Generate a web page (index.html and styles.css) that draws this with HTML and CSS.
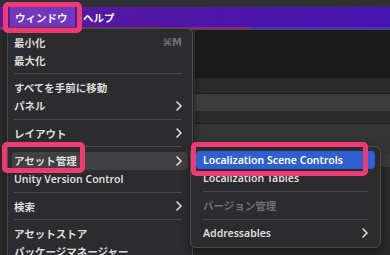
FILE: index.html
```html
<!DOCTYPE html>
<html lang="ja">

<head>
    <meta charset="UTF-8">
    <meta name="viewport" content="width=device-width, initial-scale=1.0">
    <title>ウィンドウ メニュー</title>
    <link rel="stylesheet" href="styles.css">
</head>

<body>
    <div class="screen">
        <div class="top-strip"></div>
        <div class="menubar">
            <span class="menubar-item active">ウィンドウ</span>
            <span class="menubar-item">ヘルプ</span>
        </div>
        <div class="bar-line"></div>
        <div class="bar-edge"></div>

        <!-- editor background -->
        <div class="editor">
            <div class="panel panel-dark"></div>
            <div class="panel row-a"></div>
            <div class="panel row-b"></div>
            <div class="panel row-a short"></div>
            <div class="panel row-c"></div>
            <div class="panel row-d"></div>
            <div class="panel row-a tall"></div>
        </div>

        <!-- window menu -->
        <div class="menu main-menu">
            <div class="item"><span>最小化</span><span class="shortcut">⌘M</span></div>
            <div class="item"><span>最大化</span></div>
            <div class="sep"></div>
            <div class="item"><span>すべてを手前に移動</span></div>
            <div class="item"><span>パネル</span><svg class="chev" viewBox="0 0 6 10"><polyline points="1,1 5,5 1,9" /></svg></div>
            <div class="sep"></div>
            <div class="item"><span>レイアウト</span><svg class="chev" viewBox="0 0 6 10"><polyline points="1,1 5,5 1,9" /></svg></div>
            <div class="sep"></div>
            <div class="item hover"><span>アセット管理</span><svg class="chev" viewBox="0 0 6 10"><polyline points="1,1 5,5 1,9" /></svg></div>
            <div class="item"><span>Unity Version Control</span></div>
            <div class="sep"></div>
            <div class="item"><span>検索</span><svg class="chev" viewBox="0 0 6 10"><polyline points="1,1 5,5 1,9" /></svg></div>
            <div class="sep"></div>
            <div class="item"><span>アセットストア</span></div>
            <div class="item"><span>パッケージマネージャー</span></div>
        </div>

        <!-- asset management submenu -->
        <div class="menu sub-menu">
            <div class="item selected"><span>Localization Scene Controls</span></div>
            <div class="item"><span>Localization Tables</span></div>
            <div class="sep"></div>
            <div class="item disabled"><span>バージョン管理</span></div>
            <div class="sep"></div>
            <div class="item"><span>Addressables</span><svg class="chev" viewBox="0 0 6 10"><polyline points="1,1 5,5 1,9" /></svg></div>
        </div>

        <!-- callouts -->
        <div class="callout c-window"></div>
        <div class="callout c-asset"></div>
        <div class="callout c-scene"></div>
    </div>
</body>

</html>
```

FILE: styles.css
```css
* {
    box-sizing: border-box;
}

body {
    margin: 0;
    background: #2b2b2b;
    font-family: "Noto Sans", "Noto Sans CJK JP", sans-serif;
    font-size: 10.5px;
    font-weight: 600;
    color: #dedede;
}

.screen {
    position: relative;
    width: 390px;
    height: 255px;
    overflow: hidden;
}

.top-strip {
    height: 7px;
    background: #302f33;
}

.menubar {
    height: 20px;
    display: flex;
    align-items: stretch;
    padding-left: 10px;
    background: linear-gradient(90deg, #581a9e, #4713b0);
    color: #f2f2f2;
}

.menubar-item {
    display: flex;
    align-items: center;
    padding: 0 8px;
}

.menubar-item.active {
    padding: 0 7px 0 5px;
    width: 65px;
    background: #7238bb;
}

.bar-line {
    height: 2px;
    background: linear-gradient(90deg, #8e2a7c 0, #8e2a7c 250px, #3d36c2 250px);
}

.bar-edge {
    height: 1px;
    background: #4a4a4c;
}

.editor {
    display: flex;
    flex-direction: column;
    border-left: 1px solid #3a3a3a;
    margin-left: 194px;
}

.panel-dark {
    height: 48px;
    background: #1b1b1b;
}

.row-a {
    height: 16px;
    background: #2a2a2a;
    border-bottom: 1px solid #1f1f1f;
}

.row-b {
    height: 17px;
    background: #3c3c3c;
}

.row-a.short {
    height: 13px;
}

.row-c {
    height: 30px;
    background: #343434;
}

.row-d {
    height: 13px;
    background: #3b3b3b;
}

.row-a.tall {
    height: 100px;
}

.menu {
    position: absolute;
    display: flex;
    flex-direction: column;
    background: #2c2b2e;
    border: 1px solid #4b4a4d;
    border-radius: 6px;
    box-shadow: 0 4px 10px rgba(0, 0, 0, 0.45);
}

.main-menu {
    left: 7px;
    top: 28px;
    width: 186px;
    height: 240px;
    padding: 4px 4px;
}

.sub-menu {
    left: 190px;
    top: 146px;
    width: 191px;
    padding: 4px 5px 5px;
}

.item {
    height: 18px;
    display: flex;
    align-items: center;
    justify-content: space-between;
    border-radius: 4px;
    white-space: nowrap;
}

.main-menu .item {
    padding: 0 6px 0 2px;
}

.sub-menu .item {
    padding: 0 7px 0 7px;
}

.item.hover {
    background: #414043;
}

.item.selected {
    background: #2e60d3;
    color: #ffffff;
}

.item.disabled {
    color: #6f6e71;
}

.shortcut {
    color: #727175;
    font-family: "DejaVu Sans", sans-serif;
    font-size: 10px;
}

.chev {
    width: 6px;
    height: 10px;
    fill: none;
    stroke: #e0e0e0;
    stroke-width: 1.6;
    stroke-linecap: round;
    stroke-linejoin: round;
}

.sep {
    height: 1px;
    margin: 4px 6px 4.5px 2px;
    background: #4a494c;
}

.sub-menu .sep {
    margin: 4px 7px 4.5px 7px;
}

.callout {
    position: absolute;
    border: 5px solid #ef3a72;
    border-radius: 5px;
}

.c-window {
    left: 3px;
    top: 2px;
    width: 79px;
    height: 31px;
}

.c-asset {
    left: 2px;
    top: 142px;
    width: 83px;
    height: 31px;
}

.c-scene {
    left: 191px;
    top: 142px;
    width: 177px;
    height: 34px;
}
```
